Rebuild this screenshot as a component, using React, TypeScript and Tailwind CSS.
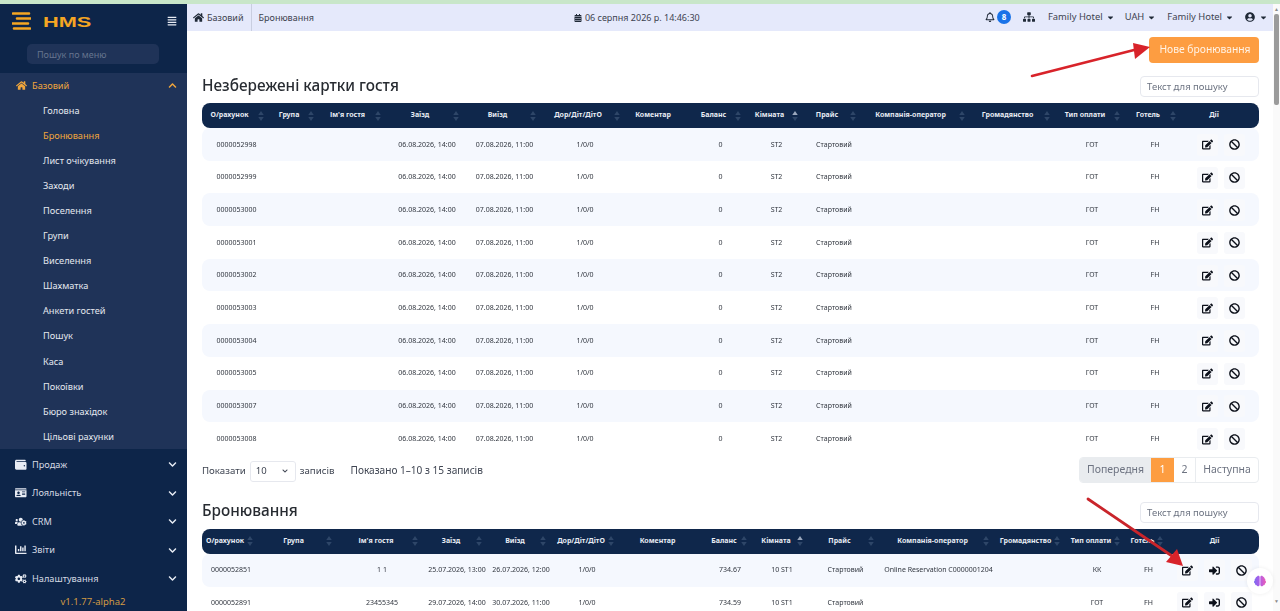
import { useState } from 'react';
import type { ReactNode } from 'react';
import {
    FaAlignJustify,
    FaBan,
    FaBrain,
    FaCalendarAlt,
    FaCaretDown,
    FaChartBar,
    FaChevronDown,
    FaChevronUp,
    FaCogs,
    FaEdit,
    FaHome,
    FaIdCard,
    FaRegBell,
    FaSignInAlt,
    FaSitemap,
    FaUserCircle,
    FaUsersCog,
    FaWallet,
} from 'react-icons/fa';

const subItems = [
    'Головна',
    'Бронювання',
    'Лист очікування',
    'Заходи',
    'Поселення',
    'Групи',
    'Виселення',
    'Шахматка',
    'Анкети гостей',
    'Пошук',
    'Каса',
    'Покоївки',
    'Бюро знахідок',
    'Цільові рахунки',
];

const otherItems = [
    { label: 'Продаж', icon: <FaWallet /> },
    { label: 'Лояльність', icon: <FaIdCard /> },
    { label: 'CRM', icon: <FaUsersCog /> },
    { label: 'Звіти', icon: <FaChartBar /> },
    { label: 'Налаштування', icon: <FaCogs /> },
];

const headers = [
    'О/рахунок',
    'Група',
    "Ім'я гостя",
    'Заїзд',
    'Виїзд',
    'Дор/Діт/ДітО',
    'Коментар',
    'Баланс',
    'Кімната',
    'Прайс',
    'Компанія-оператор',
    'Громадянство',
    'Тип оплати',
    'Готель',
    'Дії',
];

const draftWidths = [
    'w-[69px]',
    'w-[50px]',
    'w-[67px]',
    'w-[78px]',
    'w-[77px]',
    'w-[84px]',
    'w-[66px]',
    'w-[55px]',
    'w-[57px]',
    'w-[58px]',
    'w-[109px]',
    'w-[85px]',
    'w-[70px]',
    'w-[56px]',
    'w-[76px]',
];

const bookingWidths = [
    'w-[58px]',
    'w-[79px]',
    'w-[86px]',
    'w-[64px]',
    'w-[64px]',
    'w-[68px]',
    'w-[85px]',
    'w-[48px]',
    'w-[56px]',
    'w-[71px]',
    'w-[115px]',
    'w-[71px]',
    'w-[60px]',
    'w-[43px]',
    'w-[89px]',
];

const draftNumbers = [
    '0000052998',
    '0000052999',
    '0000053000',
    '0000053001',
    '0000053002',
    '0000053003',
    '0000053004',
    '0000053005',
    '0000053007',
    '0000053008',
];

const draftRows = draftNumbers.map((number) => [
    number,
    '',
    '',
    '06.08.2026, 14:00',
    '07.08.2026, 11:00',
    '1/0/0',
    '',
    '0',
    'ST2',
    'Стартовий',
    '',
    '',
    'ГОТ',
    'FH',
]);

const bookingRows = [
    [
        '0000052851',
        '',
        '1 1',
        '25.07.2026, 13:00',
        '26.07.2026, 12:00',
        '1/0/0',
        '',
        '734.67',
        '10 ST1',
        'Стартовий',
        'Online Reservation C0000001204',
        '',
        'КК',
        'FH',
    ],
    [
        '0000052891',
        '',
        '23455345',
        '29.07.2026, 14:00',
        '30.07.2026, 11:00',
        '1/0/0',
        '',
        '734.59',
        '10 ST1',
        'Стартовий',
        '',
        '',
        'ГОТ',
        'FH',
    ],
];

function SortIcon({ active }: { active: boolean }) {
    return (
        <svg
            viewBox="0 0 6 11"
            className="absolute top-1/2 right-[7px] h-[10px] w-[6px] -translate-y-1/2"
        >
            <path d="M3 0 6 4.4H0Z" fill={active ? '#9aa7bd' : '#2c4467'} />
            <path d="M3 11 6 6.6H0Z" fill="#2c4467" />
        </svg>
    );
}

function ActionButton({ children }: { children: ReactNode }) {
    return (
        <span className="flex h-[22px] w-[21px] items-center justify-center rounded-[3px] bg-[#f8f9fc] text-[11px] text-[#0b0f19]">
            {children}
        </span>
    );
}

function GuestTable({
    widths,
    rows,
    headClass,
    lastHeadClass,
    cellClass,
    canEnter,
}: {
    widths: string[];
    rows: string[][];
    headClass: string;
    lastHeadClass: string;
    cellClass: string;
    canEnter: boolean;
}) {
    return (
        <table className="w-full table-fixed border-separate border-spacing-0">
            <colgroup>
                {widths.map((width, index) => (
                    <col key={index} className={width} />
                ))}
            </colgroup>
            <thead>
                <tr>
                    {headers.map((header, index) => (
                        <th
                            key={header}
                            className={`relative h-[25px] bg-[#0d2549] text-[7px] font-bold whitespace-nowrap text-[#e8ecf4] first:rounded-l-[8px] last:rounded-r-[8px] ${
                                index === headers.length - 1
                                    ? lastHeadClass
                                    : headClass
                            }`}
                        >
                            <div className="flex justify-center">{header}</div>
                            {header !== 'Дії' && header !== 'Коментар' && (
                                <SortIcon active={header === 'Кімната'} />
                            )}
                        </th>
                    ))}
                </tr>
            </thead>
            <tbody>
                {rows.map((row, rowIndex) => (
                    <tr
                        key={row[0]}
                        className={rowIndex % 2 === 0 ? 'bg-[#f5f8fe]' : 'bg-white'}
                    >
                        {row.map((cell, cellIndex) => (
                            <td
                                key={cellIndex}
                                className={`h-[32.7px] text-center text-[7px] whitespace-nowrap text-[#2f343d] first:rounded-l-[8px] ${cellClass}`}
                            >
                                {cell}
                            </td>
                        ))}
                        <td className={`h-[32.7px] rounded-r-[8px] ${cellClass}`}>
                            <div className="flex items-center justify-center gap-[6px]">
                                <ActionButton>
                                    <FaEdit />
                                </ActionButton>
                                {canEnter && (
                                    <ActionButton>
                                        <FaSignInAlt />
                                    </ActionButton>
                                )}
                                <ActionButton>
                                    <FaBan />
                                </ActionButton>
                            </div>
                        </td>
                    </tr>
                ))}
            </tbody>
        </table>
    );
}

function SearchBox() {
    return (
        <input
            type="text"
            placeholder="Текст для пошуку"
            className="h-[21px] w-[119px] rounded-[4px] border border-[#e6e8ee] bg-white px-[6px] text-[9.5px] text-[#4b5563] placeholder:text-[#6b7280] focus:outline-none"
        />
    );
}

function SectionHead({ title, className }: { title: string; className: string }) {
    return (
        <div className={`mb-[6px] flex items-center justify-between ${className}`}>
            <h2 className="-mt-[3px] text-[15.3px] leading-[21px] font-medium text-[#25292f]">
                {title}
            </h2>
            <SearchBox />
        </div>
    );
}

function Sidebar() {
    const [search, setSearch] = useState('');

    return (
        <aside className="flex w-[187px] shrink-0 flex-col bg-[#0d2549]">
            <div className="h-[69px] shrink-0">
                <div className="flex h-[34px] items-center pr-[10px] pl-[12px]">
                    <svg viewBox="0 0 19 18" className="h-[18px] w-[19px]">
                        <path
                            d="M1 1.5h16M5 6.5h14M0 11.5h16M2 16.5h16"
                            stroke="#f5a623"
                            strokeWidth="2.6"
                            strokeLinecap="round"
                        />
                    </svg>
                    <span className="ml-[12px] w-[48px] origin-left scale-x-[1.45] font-['Liberation_Sans',sans-serif] text-[15px] leading-none font-bold text-[#f5a623]">
                        HMS
                    </span>
                    <FaAlignJustify className="ml-auto text-[10px] text-[#e8ecf4]" />
                </div>
                <input
                    type="text"
                    value={search}
                    onChange={(e) => setSearch(e.target.value)}
                    placeholder="Пошук по меню"
                    className="mt-[6px] ml-[27px] h-[20px] w-[132px] rounded-[5px] bg-[#1f3358] px-[10px] text-[9px] text-white placeholder:text-[#66758f] focus:outline-none"
                />
            </div>
            <div className="shrink-0 bg-[#1f3358]">
                <div className="flex h-[25px] items-center pr-[10px] pl-[16px] text-[9.2px] text-[#f0a63c]">
                    <FaHome className="text-[11px]" />
                    <span className="ml-[5px]">Базовий</span>
                    <FaChevronUp className="ml-auto text-[9px]" />
                </div>
                {subItems.map((item) => (
                    <div
                        key={item}
                        className={`flex h-[25.1px] items-center pl-[43px] text-[9.2px] ${
                            item === 'Бронювання'
                                ? 'text-[#f0a63c]'
                                : 'text-[#e3e7ee]'
                        }`}
                    >
                        {item}
                    </div>
                ))}
            </div>
            <div className="mt-[1px]">
                {otherItems.map((item) => (
                    <div
                        key={item.label}
                        className="flex h-[28.5px] items-center pr-[10px] pl-[15px] text-[9.2px] text-[#d5dae3]"
                    >
                        <span className="w-[13px] text-[11.5px] text-[#e8ecf4]">
                            {item.icon}
                        </span>
                        <span className="ml-[4px]">{item.label}</span>
                        <FaChevronDown className="ml-auto text-[9px] text-[#e8ecf4]" />
                    </div>
                ))}
            </div>
            <div className="mt-[2px] pr-[1px] text-center text-[9.5px] text-[#d19a44]">
                v1.1.77-alpha2
            </div>
        </aside>
    );
}

function TopBar() {
    return (
        <header className="flex h-[27px] shrink-0 items-center bg-[#e5e9fb] text-[9px] text-[#3d4350]">
            <div className="flex h-full items-center border-r border-[#c9cee0] pr-[7px] pl-[6px]">
                <FaHome className="text-[11px] text-[#1f2937]" />
                <span className="ml-[3px]">Базовий</span>
            </div>
            <span className="ml-[7px]">Бронювання</span>
            <div className="ml-[260px] flex items-center">
                <FaCalendarAlt className="text-[8px] text-[#1f2937]" />
                <span className="ml-[3px]">06 серпня 2026 р. 14:46:30</span>
            </div>
            <div className="ml-auto flex items-center pr-[5px] text-[9.4px]">
                <FaRegBell className="text-[10px] text-[#1f2937]" />
                <span className="ml-[2px] flex h-[14px] w-[14px] items-center justify-center rounded-full bg-[#1a73e8] text-[8px] font-bold text-white">
                    8
                </span>
                <FaSitemap className="ml-[12px] text-[12px] text-[#1f2937]" />
                <span className="ml-[13px]">Family Hotel</span>
                <FaCaretDown className="ml-[3px] text-[9px] text-[#1f2937]" />
                <span className="ml-[10px]">UAH</span>
                <FaCaretDown className="ml-[3px] text-[9px] text-[#1f2937]" />
                <span className="ml-[11px]">Family Hotel</span>
                <FaCaretDown className="ml-[3px] text-[9px] text-[#1f2937]" />
                <FaUserCircle className="ml-[11px] text-[10px] text-[#1f2937]" />
                <FaCaretDown className="ml-[4px] text-[9px] text-[#1f2937]" />
            </div>
        </header>
    );
}

function TableFooter() {
    return (
        <div className="flex h-[30px] items-center text-[9.7px] text-[#3d4350]">
            <span className="pt-[3px]">Показати</span>
            <div className="mt-[3px] ml-[4px] flex h-[21px] w-[46px] items-center justify-between rounded-[3px] border border-[#e6e8ee] pr-[7px] pl-[5px] text-[9.5px]">
                10
                <FaChevronDown className="text-[6px]" />
            </div>
            <span className="ml-[4px] pt-[3px]">записів</span>
            <span className="ml-[16px] pt-[1px] text-[10.1px]">
                Показано 1–10 з 15 записів
            </span>
            <div className="ml-auto flex h-[26px] overflow-hidden rounded-[4px] border border-[#e9ecef] text-[10.5px] text-[#6c7280]">
                <span className="flex w-[71px] items-center justify-center bg-[#e9ecef]">
                    Попередня
                </span>
                <span className="flex w-[23px] items-center justify-center bg-[#fd9c3f] text-white">
                    1
                </span>
                <span className="flex w-[22px] items-center justify-center border-r border-[#e9ecef]">
                    2
                </span>
                <span className="flex w-[62px] items-center justify-center">
                    Наступна
                </span>
            </div>
        </div>
    );
}

function Scrollbar() {
    return (
        <div className="flex w-[7px] shrink-0 flex-col items-center bg-[#fafafa]">
            <span className="mt-[2px] text-[5px] leading-[6px] text-[#8a8a8a]">▲</span>
            <div className="mt-[2px] h-[91px] w-[5px] rounded-[2px] bg-[#9b9b9b]" />
            <span className="mt-auto mb-[7px] text-[5px] leading-[6px] text-[#8a8a8a]">▼</span>
        </div>
    );
}

export default function App() {
    return (
        <div className="relative flex h-screen flex-col overflow-hidden bg-white font-['Noto_Sans','Open_Sans',sans-serif]">
            <div className="h-[4px] shrink-0 bg-[#c8e6c9]" />
            <div className="flex min-h-0 flex-1">
                <Sidebar />
                <div className="flex min-w-0 flex-1 flex-col">
                    <TopBar />
                    <main className="min-h-0 flex-1 overflow-hidden pt-[6px] pr-[14px] pl-[15px] opacity-[.99]">
                        <div className="flex justify-end">
                            <button className="h-[26px] w-[110px] rounded-[4px] bg-[#fd9c3f] pl-[2px] text-[10.3px] text-[#fff3e6]">
                                Нове бронювання
                            </button>
                        </div>
                        <SectionHead title="Незбережені картки гостя" className="mt-[13px]" />
                        <GuestTable
                            widths={draftWidths}
                            rows={draftRows}
                            headClass="pr-[24px] pl-[10px]"
                            lastHeadClass="pr-[24px] pl-[10px]"
                            cellClass="pt-[1px]"
                            canEnter={false}
                        />
                        <TableFooter />
                        <SectionHead title="Бронювання" className="mt-[17px]" />
                        <GuestTable
                            widths={bookingWidths}
                            rows={bookingRows}
                            headClass="pr-[16px] pl-[4px]"
                            lastHeadClass=""
                            cellClass=""
                            canEnter
                        />
                    </main>
                </div>
                <Scrollbar />
            </div>
            <svg
                viewBox="0 0 1280 611"
                className="pointer-events-none absolute inset-0 h-[611px] w-[1280px]"
            >
                <defs>
                    <linearGradient id="brainFill" x1="0" y1="0" x2="1" y2="0">
                        <stop offset="0" stopColor="#7c6cf0" />
                        <stop offset="0.5" stopColor="#b35be6" />
                        <stop offset="1" stopColor="#ec5fb5" />
                    </linearGradient>
                </defs>
                <path d="M1032 76 1138 49" stroke="#d8232a" strokeWidth="2.6" strokeLinecap="round" />
                <path d="M1150 47 1133 43 1135 59Z" fill="#d8232a" />
                <path d="M1088 499 1172 556" stroke="#c9252b" strokeWidth="2.8" strokeLinecap="round" />
                <path d="M1183 566 1166 562 1177 549Z" fill="#d8232a" />
            </svg>
            <div className="absolute top-[568px] left-[1247px] flex h-[26px] w-[26px] items-center justify-center rounded-full bg-white shadow-[0_0_4px_rgba(0,0,0,0.08)]">
                <FaBrain className="text-[12px]" fill="url(#brainFill)" />
            </div>
        </div>
    );
}
